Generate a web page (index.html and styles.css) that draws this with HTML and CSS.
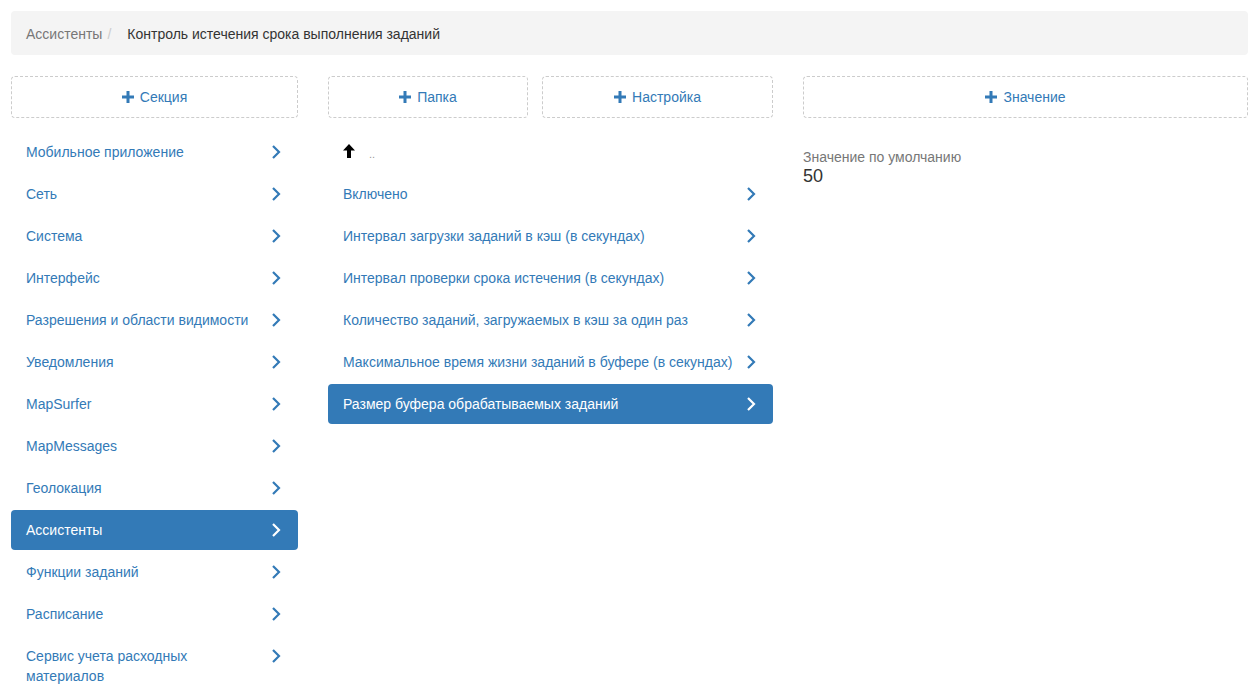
FILE: index.html
```html
<!DOCTYPE html>
<html lang="ru">
  <head>
    <meta charset="UTF-8" />
    <title>Настройки</title>
    <link rel="stylesheet" href="styles.css">
  </head>
  <body>
    <div class="container">
      <ol class="breadcrumb">
        <li><a href="#">Ассистенты</a></li>
        <li class="active">Контроль истечения срока выполнения заданий</li>
      </ol>

      <div class="columns">
        <!-- sections -->
        <div class="col col-sections">
          <div class="add-row">
            <button class="add-btn full">
              <svg class="plus" viewBox="0 0 12 12"><path d="M4.5 0h3v4.5H12v3H7.5V12h-3V7.5H0v-3h4.5z"/></svg>Секция
            </button>
          </div>
          <ul class="nav-list">
            <li><a href="#"><span>Мобильное приложение</span><svg class="chev" viewBox="0 0 14 14"><polyline points="4,1 10,7 4,13"/></svg></a></li>
            <li><a href="#"><span>Сеть</span><svg class="chev" viewBox="0 0 14 14"><polyline points="4,1 10,7 4,13"/></svg></a></li>
            <li><a href="#"><span>Система</span><svg class="chev" viewBox="0 0 14 14"><polyline points="4,1 10,7 4,13"/></svg></a></li>
            <li><a href="#"><span>Интерфейс</span><svg class="chev" viewBox="0 0 14 14"><polyline points="4,1 10,7 4,13"/></svg></a></li>
            <li><a href="#"><span>Разрешения и области видимости</span><svg class="chev" viewBox="0 0 14 14"><polyline points="4,1 10,7 4,13"/></svg></a></li>
            <li><a href="#"><span>Уведомления</span><svg class="chev" viewBox="0 0 14 14"><polyline points="4,1 10,7 4,13"/></svg></a></li>
            <li><a href="#"><span>MapSurfer</span><svg class="chev" viewBox="0 0 14 14"><polyline points="4,1 10,7 4,13"/></svg></a></li>
            <li><a href="#"><span>MapMessages</span><svg class="chev" viewBox="0 0 14 14"><polyline points="4,1 10,7 4,13"/></svg></a></li>
            <li><a href="#"><span>Геолокация</span><svg class="chev" viewBox="0 0 14 14"><polyline points="4,1 10,7 4,13"/></svg></a></li>
            <li class="active"><a href="#"><span>Ассистенты</span><svg class="chev" viewBox="0 0 14 14"><polyline points="4,1 10,7 4,13"/></svg></a></li>
            <li><a href="#"><span>Функции заданий</span><svg class="chev" viewBox="0 0 14 14"><polyline points="4,1 10,7 4,13"/></svg></a></li>
            <li><a href="#"><span>Расписание</span><svg class="chev" viewBox="0 0 14 14"><polyline points="4,1 10,7 4,13"/></svg></a></li>
            <li><a href="#"><span>Сервис учета расходных материалов</span><svg class="chev" viewBox="0 0 14 14"><polyline points="4,1 10,7 4,13"/></svg></a></li>
          </ul>
        </div>

        <!-- settings -->
        <div class="col col-settings">
          <div class="add-row split">
            <button class="add-btn folder">
              <svg class="plus" viewBox="0 0 12 12"><path d="M4.5 0h3v4.5H12v3H7.5V12h-3V7.5H0v-3h4.5z"/></svg>Папка
            </button>
            <button class="add-btn setting">
              <svg class="plus" viewBox="0 0 12 12"><path d="M4.5 0h3v4.5H12v3H7.5V12h-3V7.5H0v-3h4.5z"/></svg>Настройка
            </button>
          </div>
          <ul class="nav-list">
            <li class="up"><a href="#"><svg class="arrow-up" viewBox="0 0 12 14"><path d="M6 0L12 6.5H8V14H4V6.5H0z"/></svg><span class="dots">..</span></a></li>
            <li><a href="#"><span>Включено</span><svg class="chev" viewBox="0 0 14 14"><polyline points="4,1 10,7 4,13"/></svg></a></li>
            <li><a href="#"><span>Интервал загрузки заданий в кэш (в секундах)</span><svg class="chev" viewBox="0 0 14 14"><polyline points="4,1 10,7 4,13"/></svg></a></li>
            <li><a href="#"><span>Интервал проверки срока истечения (в секундах)</span><svg class="chev" viewBox="0 0 14 14"><polyline points="4,1 10,7 4,13"/></svg></a></li>
            <li><a href="#"><span>Количество заданий, загружаемых в кэш за один раз</span><svg class="chev" viewBox="0 0 14 14"><polyline points="4,1 10,7 4,13"/></svg></a></li>
            <li><a href="#"><span>Максимальное время жизни заданий в буфере (в секундах)</span><svg class="chev" viewBox="0 0 14 14"><polyline points="4,1 10,7 4,13"/></svg></a></li>
            <li class="active"><a href="#"><span>Размер буфера обрабатываемых заданий</span><svg class="chev" viewBox="0 0 14 14"><polyline points="4,1 10,7 4,13"/></svg></a></li>
          </ul>
        </div>

        <!-- values -->
        <div class="col col-values">
          <div class="add-row">
            <button class="add-btn full">
              <svg class="plus" viewBox="0 0 12 12"><path d="M4.5 0h3v4.5H12v3H7.5V12h-3V7.5H0v-3h4.5z"/></svg>Значение
            </button>
          </div>
          <div class="value-block">
            <div class="value-label">Значение по умолчанию</div>
            <div class="value">50</div>
          </div>
        </div>
      </div>
    </div>
  </body>
</html>
```

FILE: styles.css
```css
* {
  box-sizing: border-box;
}

body {
  font-family: "Liberation Sans", Arial, Helvetica, sans-serif;
  font-size: 14px;
  line-height: 20px;
  color: #333;
  margin: 0;
  padding: 0;
  background: #fff;
}

a {
  color: #337ab7;
  text-decoration: none;
}

.container {
  padding: 11px;
}

.breadcrumb {
  list-style: none;
  margin: 0 0 21px;
  padding: 13px 15px 11px;
  background-color: #f4f4f4;
  border-radius: 4px;
  display: flex;
}

.breadcrumb li a {
  color: #777;
}

.breadcrumb li + li:before {
  content: "/";
  color: #ccc;
  padding: 0 16px 0 5px;
}

.breadcrumb .active {
  color: #333;
}

.columns {
  display: flex;
  gap: 30px;
  align-items: flex-start;
}

.col-sections {
  width: 287px;
  flex: none;
}

.col-settings,
.col-values {
  width: 445px;
  flex: none;
}

.add-row {
  display: flex;
  justify-content: space-between;
}

.add-btn {
  height: 42px;
  background: #fff;
  border: 1px dashed #ccc;
  border-radius: 4px;
  color: #337ab7;
  font-family: inherit;
  font-size: 14px;
  display: flex;
  align-items: center;
  justify-content: center;
  cursor: pointer;
  padding: 0;
}

.add-btn.full {
  width: 100%;
}

.add-btn.folder {
  width: 200px;
}

.add-btn.setting {
  width: 231px;
}

.plus {
  width: 12px;
  height: 12px;
  fill: #337ab7;
  margin-right: 6px;
  margin-top: -1px;
}

.nav-list {
  list-style: none;
  margin: 14px 0 0;
  padding: 0;
}

.nav-list li + li {
  margin-top: 2px;
}

.nav-list a {
  display: flex;
  align-items: flex-start;
  padding: 10px 15px;
  border-radius: 4px;
}

.nav-list a span {
  flex: 1;
  padding-right: 10px;
}

.chev {
  width: 14px;
  height: 14px;
  flex: none;
  margin-top: 3px;
  fill: none;
  stroke: #337ab7;
  stroke-width: 2.2;
}

.nav-list .active a {
  background-color: #337ab7;
  color: #fff;
}

.nav-list .active .chev {
  stroke: #fff;
}

.nav-list .up a {
  height: 40px;
  align-items: center;
  padding-top: 0;
  padding-bottom: 0;
}

.arrow-up {
  width: 12px;
  height: 14px;
  fill: #000;
  margin-top: -2px;
}

.dots {
  color: #999;
  font-size: 11px;
  line-height: 14px;
  margin-left: 14px;
  margin-top: 4px;
}

.value-block {
  margin-top: 29px;
}

.value-label {
  color: #777;
}

.value {
  font-size: 18px;
  line-height: 18px;
  color: #333;
}
```
